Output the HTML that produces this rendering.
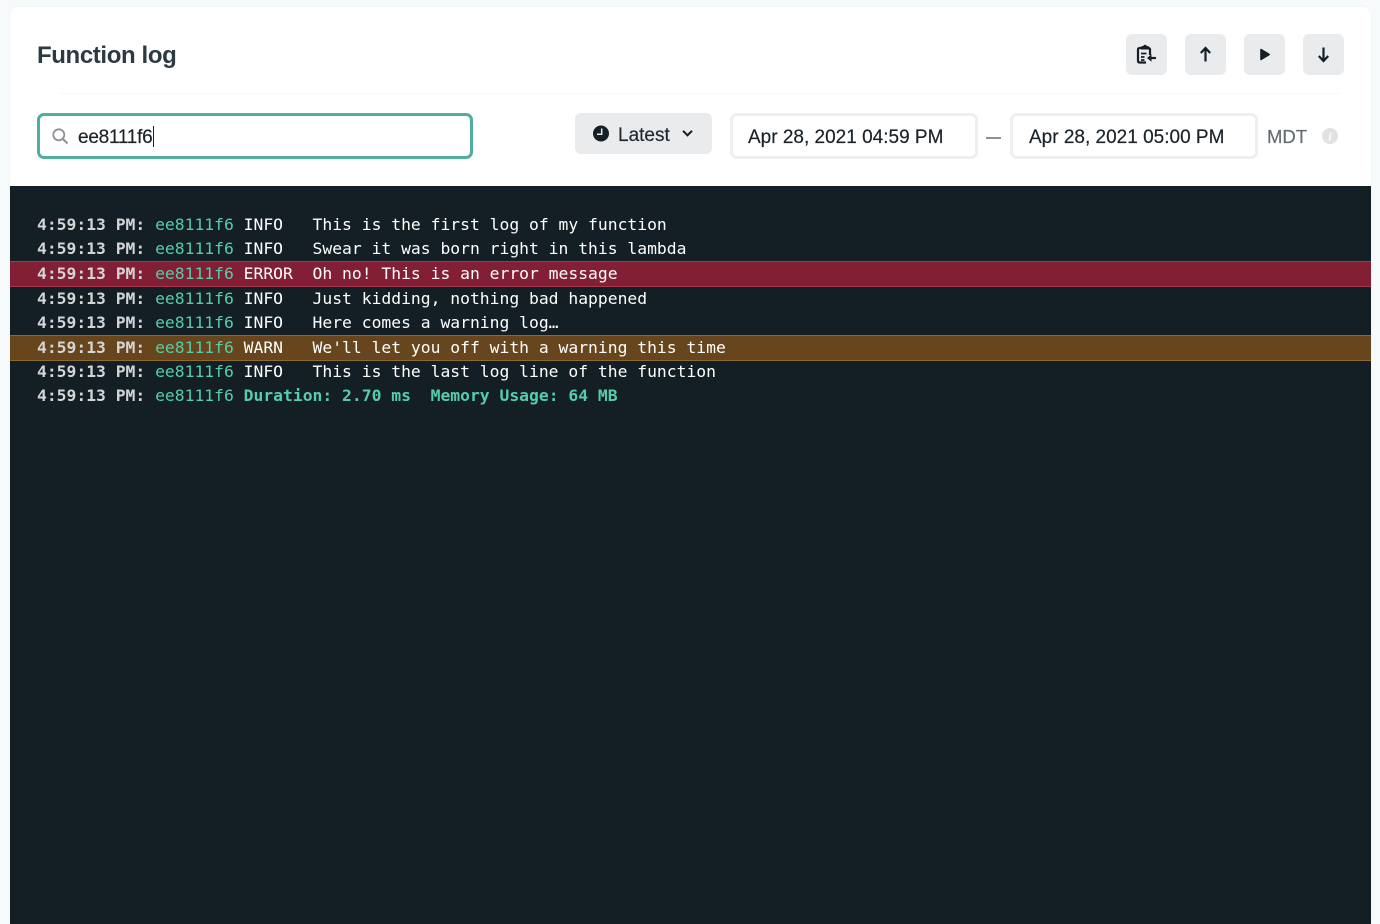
<!DOCTYPE html>
<html><head><meta charset="utf-8"><style>
html,body{margin:0;padding:0;width:1380px;height:924px;overflow:hidden;background:#f7fafb;}
*{box-sizing:border-box;}
.abs{position:absolute;}
body{font-family:"Liberation Sans",sans-serif;color:#1a2329;position:relative;}
#card{left:10px;top:7px;width:1361px;height:917px;background:#fff;border-radius:8px 8px 0 0;overflow:hidden;box-shadow:0 0 2px rgba(30,50,60,.06);}
#term{left:10px;top:186px;width:1361px;height:738px;background:#131e25;}
.btn{top:34px;width:41px;height:41px;background:#eaebed;border-radius:6px;}
.btn svg{position:absolute;left:0;top:0;}
.inp{top:113px;height:46px;border:3px solid #eeeff0;border-radius:7px;background:#fff;}
.t{white-space:pre;line-height:24px;font-size:19px;-webkit-text-stroke:.2px currentColor;}
.row{left:10px;width:1361px;height:26px;}
.l{left:37px;font-family:"DejaVu Sans Mono",monospace;font-size:16.35px;line-height:24px;height:24px;white-space:pre;color:#fff;}
.l b.ts{color:#d3d5d6;font-weight:700;}
.l span{color:#55cdaa;}
.l b.g{color:#55cdaa;font-weight:700;}
</style></head><body>
<div class="abs" id="card"></div>
<div class="abs t" style="left:37px;top:42px;font-size:24px;line-height:28px;font-weight:700;color:#2e3a41;letter-spacing:-.38px;-webkit-text-stroke:0;">Function log</div>
<div class="abs" style="left:60px;top:93px;width:1280px;height:1px;background:#f7f8f8;"></div>

<div class="abs btn" style="left:1126px;"><svg width="41" height="41" viewBox="0 0 41 41" fill="none"><path d="M20 28.500h-6.500a1.500 1.500 0 0 1-1.500-1.500V15.500a1.500 1.500 0 0 1 1.500-1.500h9a1.500 1.500 0 0 1 1.500 1.500V21" stroke="#141f26" stroke-width="2.200"/><path d="M15 15.500v-2a1.500 1.500 0 0 1 1.500-1.500h.8a1.800 1.800 0 0 1 3.400 0h.8a1.500 1.500 0 0 1 1.500 1.500v2z" fill="#141f26"/><path d="M15 19.500h5.500M15 23h3.500M15 26h3.500" stroke="#141f26" stroke-width="1.700"/><path d="M24 24h6" stroke="#141f26" stroke-width="2.200"/><path d="M25.500 20.200L21 24l4.500 3.800z" fill="#141f26"/></svg></div>
<div class="abs btn" style="left:1185px;"><svg width="41" height="41" viewBox="0 0 41 41" fill="none"><path d="M20.500 27.500V15M15.800 19l4.700-5 4.700 5" stroke="#141f26" stroke-width="2.200"/></svg></div>
<div class="abs btn" style="left:1244px;"><svg width="41" height="41" viewBox="0 0 41 41"><path d="M16.200 15.500a.8.8 0 0 1 1.200-.6L25.500 19.800a.8.8 0 0 1 0 1.400L17.400 26.100a.8.8 0 0 1-1.200-.6z" fill="#141f26"/></svg></div>
<div class="abs btn" style="left:1303px;"><svg width="41" height="41" viewBox="0 0 41 41" fill="none"><path d="M20.500 13.500V26M15.800 22l4.700 5 4.700-5" stroke="#141f26" stroke-width="2.200"/></svg></div>

<div class="abs" style="left:37px;top:113px;width:436px;height:46px;border:3px solid #50ae9e;border-radius:7px;background:#fff;"></div>
<svg class="abs" style="left:51px;top:127px;" width="18" height="18" viewBox="0 0 18 18" fill="none"><circle cx="7.800" cy="7.800" r="5.500" stroke="#8d9296" stroke-width="1.800"/><path d="M12 12l4.500 4.500" stroke="#8d9296" stroke-width="2"/></svg>
<div class="abs t" style="left:78px;top:126px;letter-spacing:-.25px;">ee8111f6</div>
<div class="abs" style="left:153px;top:126px;width:1px;height:21px;background:#1a2329;"></div>

<div class="abs" style="left:575px;top:113px;width:137px;height:41px;background:#eaebed;border-radius:6px;"></div>
<svg class="abs" style="left:592px;top:125px;" width="18" height="18" viewBox="0 0 18 18"><circle cx="9" cy="8.500" r="8" fill="#141f26"/><path d="M9.700 3.500v5.700H5" stroke="#eaebed" stroke-width="1.500" fill="none"/></svg>
<div class="abs t" style="left:618px;top:124px;color:#1f2a31;">Latest</div>
<svg class="abs" style="left:681px;top:129px;" width="13" height="10" viewBox="0 0 13 10" fill="none"><path d="M2 1.800l4.500 4.500L11 1.800" stroke="#141f26" stroke-width="2"/></svg>

<div class="abs inp" style="left:730px;width:248px;"></div>
<div class="abs t" style="left:748px;top:126px;">Apr 28, 2021 04:59 PM</div>
<div class="abs" style="left:986px;top:137px;width:15px;height:2px;background:#8b9196;"></div>
<div class="abs inp" style="left:1010px;width:248px;"></div>
<div class="abs t" style="left:1029px;top:126px;">Apr 28, 2021 05:00 PM</div>
<div class="abs t" style="left:1267px;top:125px;color:#646d73;font-size:18.500px;">MDT</div>
<svg class="abs" style="left:1321px;top:127px;" width="18" height="18" viewBox="0 0 18 18"><circle cx="9" cy="9" r="8" fill="#dfe1e3"/><text x="9" y="13.500" text-anchor="middle" font-family="Liberation Serif,serif" font-style="italic" font-weight="700" font-size="12" fill="#fff">i</text></svg>

<div class="abs" id="term"></div>
<div class="abs row" style="top:261px;background:#821f35;border-top:1px solid #a63650;border-bottom:1px solid #a63650;"></div>
<div class="abs row" style="top:334.500px;background:#68461d;border-top:1px solid #8f6a2a;border-bottom:1px solid #8f6a2a;"></div>

<div class="abs l" style="top:213px;"><b class="ts">4:59:13 PM:</b> <span>ee8111f6</span> INFO   This is the first log of my function</div>
<div class="abs l" style="top:237px;"><b class="ts">4:59:13 PM:</b> <span>ee8111f6</span> INFO   Swear it was born right in this lambda</div>
<div class="abs l" style="top:262px;"><b class="ts">4:59:13 PM:</b> <span>ee8111f6</span> ERROR  Oh no! This is an error message</div>
<div class="abs l" style="top:287px;"><b class="ts">4:59:13 PM:</b> <span>ee8111f6</span> INFO   Just kidding, nothing bad happened</div>
<div class="abs l" style="top:311px;"><b class="ts">4:59:13 PM:</b> <span>ee8111f6</span> INFO   Here comes a warning log…</div>
<div class="abs l" style="top:336px;"><b class="ts">4:59:13 PM:</b> <span>ee8111f6</span> WARN   We'll let you off with a warning this time</div>
<div class="abs l" style="top:360px;"><b class="ts">4:59:13 PM:</b> <span>ee8111f6</span> INFO   This is the last log line of the function</div>
<div class="abs l" style="top:384px;"><b class="ts">4:59:13 PM:</b> <span>ee8111f6</span> <b class="g">Duration: 2.70 ms  Memory Usage: 64 MB</b></div>
</body></html>
